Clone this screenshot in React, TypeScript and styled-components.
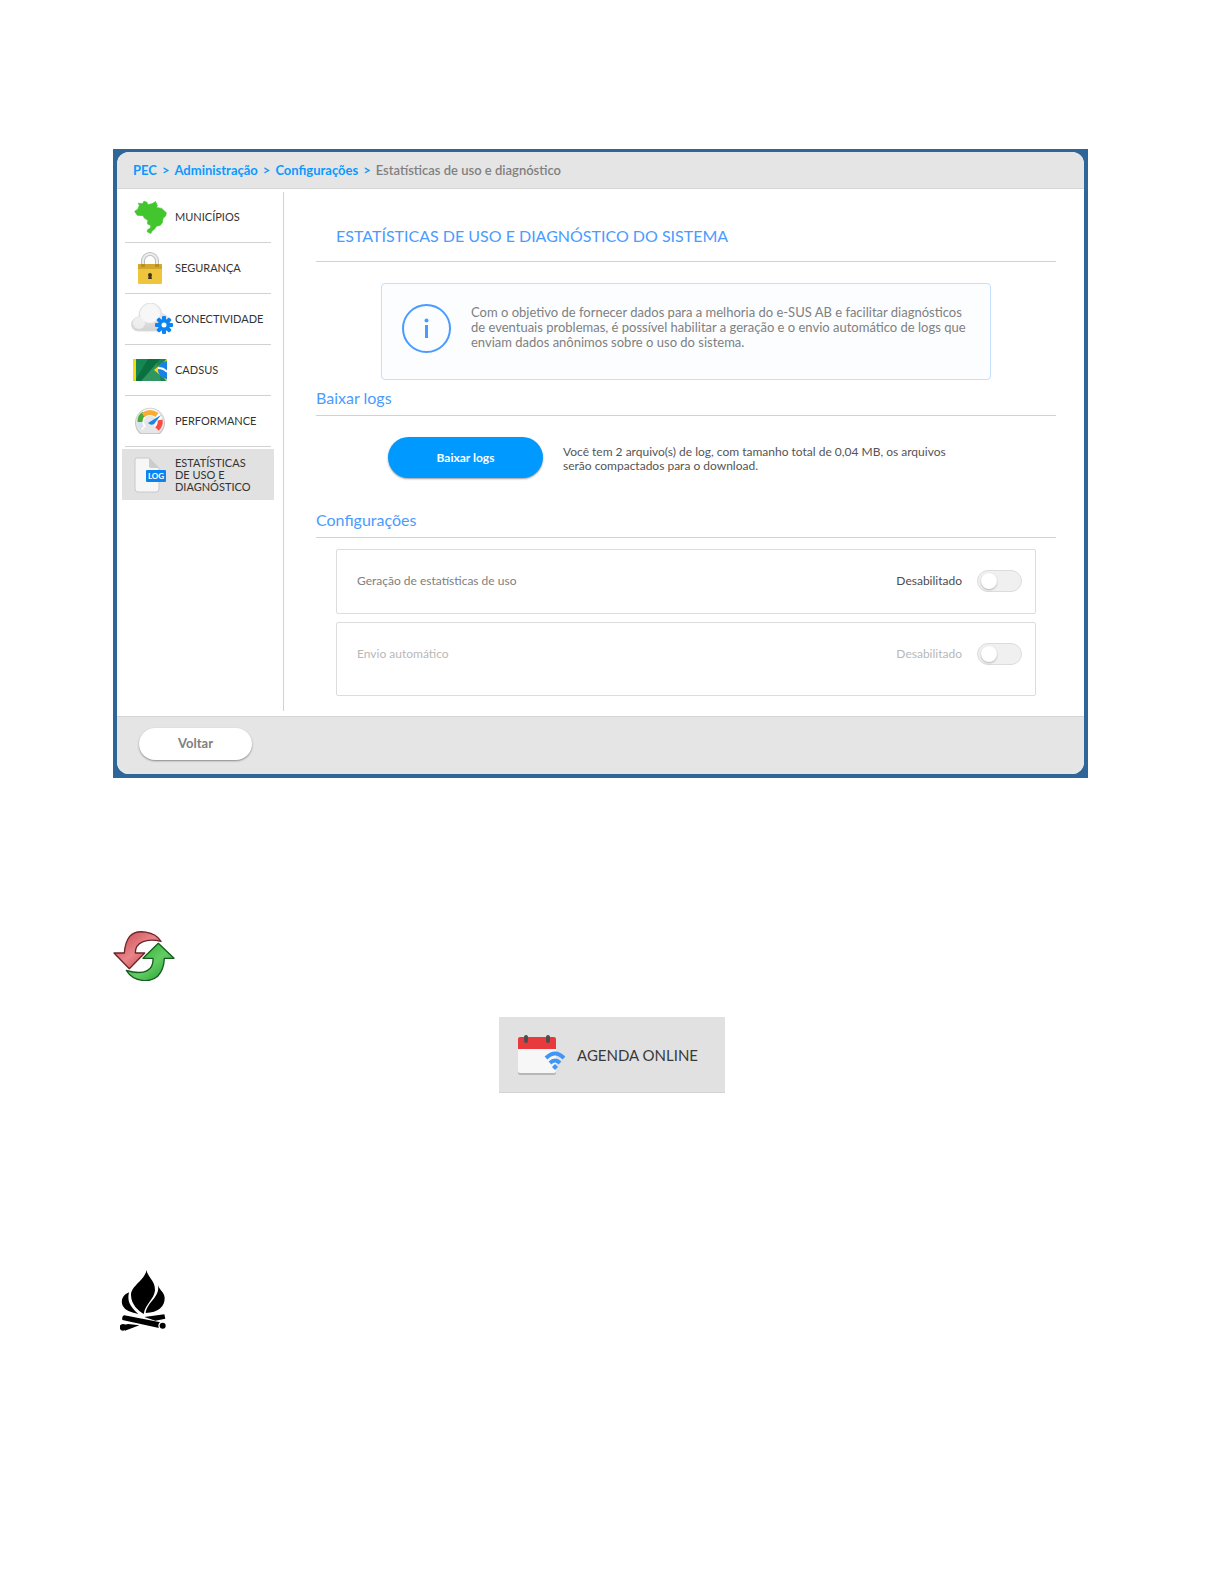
import React from "react";
import styled, { createGlobalStyle } from "styled-components";

const GlobalStyle = createGlobalStyle`
  * { box-sizing: border-box; }
  body {
    margin: 0;
    background: #ffffff;
    color: #444444;
    font-family: Lato, "Liberation Sans", sans-serif;
  }
`;

const Page = styled.main`
  display: flex;
  flex-direction: column;
  padding: 149px 113px 250px;
`;

const Frame = styled.section`
  width: 100%;
  max-width: 975px;
  padding: 3px 4px 4px;
  background: #2f6699;
`;

const Shell = styled.div`
  overflow: hidden;
  border-radius: 12px;
  background: #ffffff;
`;

const Breadcrumb = styled.nav`
  display: flex;
  align-items: center;
  gap: 5px;
  height: 37px;
  padding: 0 16px;
  border-bottom: 1px solid #d6d6d6;
  background: #e5e5e5;
  color: #0d99ff;
  font-size: 13px;
  font-weight: 700;
`;

const Crumb = styled.a`
  color: #0d99ff;
  text-decoration: none;
`;

const CurrentCrumb = styled.span`
  color: #808080;
  font-weight: 600;
`;

const Body = styled.div`
  display: flex;
  padding: 3px 28px 5px 0;
`;

const Sidebar = styled.nav`
  flex: none;
  width: 167px;
  padding: 0 12px 0 8px;
  border-right: 1px solid #d2d2d2;
`;

const SideLink = styled.a<{ $active?: boolean }>`
  display: flex;
  align-items: center;
  height: 51px;
  margin: ${(p) => (p.$active ? "2px -3px 0" : "0")};
  padding: ${(p) => (p.$active ? "0 3px" : "0")};
  border-bottom: ${(p) => (p.$active ? "0" : "1px solid #d2d2d2")};
  background: ${(p) => (p.$active ? "#e1e1e1" : "transparent")};
  color: #333333;
  font-size: 11px;
  line-height: 12px;
  text-decoration: none;
`;

const IconSlot = styled.span`
  display: flex;
  flex: none;
  justify-content: center;
  width: 50px;
`;

const Content = styled.div`
  flex: 1;
  min-width: 0;
  padding: 0 0 15px 32px;
`;

const PageTitle = styled.h1`
  margin: 0;
  padding: 34px 20px 15px;
  border-bottom: 1px solid #d2d2d2;
  color: #4a9bff;
  font-size: 16px;
  font-weight: 400;
  line-height: 20px;
`;

const SectionTitle = styled.h2<{ $gap: number }>`
  margin: ${(p) => p.$gap}px 0 0;
  padding-bottom: 7px;
  border-bottom: 1px solid #d2d2d2;
  color: #4a9bff;
  font-size: 16px;
  font-weight: 400;
  line-height: 20px;
`;

const Notice = styled.div`
  display: flex;
  gap: 20px;
  margin: 21px 65px 0;
  padding: 20px 20px 26px;
  border: 1px solid #c5e0fb;
  border-radius: 4px;
  background: #fbfdff;
`;

const NoticeText = styled.p`
  margin: 1px 0 0;
  color: #808080;
  font-size: 13px;
  line-height: 15px;
`;

const DownloadRow = styled.div`
  display: flex;
  align-items: center;
  gap: 20px;
  margin-top: 21px;
  padding: 0 72px;
`;

const PrimaryButton = styled.button`
  flex: none;
  width: 155px;
  height: 41px;
  border: 0;
  border-radius: 21px;
  background: #0099ff;
  box-shadow: 0 1px 2px rgba(0, 0, 0, 0.4);
  color: #ffffff;
  font: 700 12px Lato, sans-serif;
`;

const DownloadText = styled.p`
  max-width: 400px;
  margin: 3px 0 0;
  color: #555555;
  font-size: 12px;
  line-height: 14px;
`;

const Settings = styled.div`
  display: flex;
  flex-direction: column;
  gap: 8px;
  margin: 11px 20px 0;
`;

const Setting = styled.div<{ $muted?: boolean }>`
  display: flex;
  align-items: center;
  gap: 15px;
  padding: 20px 13px ${(p) => (p.$muted ? 30 : 21)}px 20px;
  border: 1px solid #dcdcdc;
  border-radius: 2px;
  color: ${(p) => (p.$muted ? "#b8b8b8" : "#808080")};
  font-size: 12px;
  line-height: 14px;
`;

const SettingLabel = styled.label`
  flex: 1;
`;

const State = styled.span<{ $muted?: boolean }>`
  color: ${(p) => (p.$muted ? "#b8b8b8" : "#4d4d4d")};
`;

const Switch = styled.input`
  display: flex;
  align-items: center;
  appearance: none;
  width: 45px;
  height: 22px;
  margin: 0;
  padding: 0 3px;
  border: 1px solid #dcdcdc;
  border-radius: 11px;
  background: #f0f0f0;

  &::before {
    content: "";
    width: 16px;
    height: 16px;
    border-radius: 50%;
    background: #ffffff;
    box-shadow: 0 1px 2px rgba(0, 0, 0, 0.25);
  }

  &:checked {
    justify-content: flex-end;
    background: #0099ff;
  }
`;

const Footer = styled.footer`
  display: flex;
  padding: 11px 22px 14px;
  border-top: 1px solid #d6d6d6;
  background: #e5e5e5;
`;

const BackButton = styled.button`
  width: 113px;
  height: 32px;
  padding: 0 0 2px;
  border: 0;
  border-radius: 16px;
  background: #ffffff;
  box-shadow: 0 1px 2px rgba(0, 0, 0, 0.4);
  color: #808080;
  font: 700 13px Lato, sans-serif;
`;

const Figure = styled.div<{ $top: number; $indent?: number }>`
  display: flex;
  margin-top: ${(p) => p.$top}px;
  padding-left: ${(p) => p.$indent ?? 0}px;
`;

const AgendaButton = styled.button`
  display: flex;
  align-items: center;
  align-self: center;
  gap: 12px;
  width: 226px;
  height: 76px;
  margin-top: 36px;
  padding: 0 19px;
  border: 0;
  border-bottom: 1px solid #d4d4d4;
  background: #e1e1e1;
  color: #3a3a3a;
  font: 400 15px Lato, sans-serif;
`;

const BrazilIcon = () => (
  <svg width="33" height="34" viewBox="76 168 100 102" aria-hidden="true">
    <path
      fill="#42c52d"
      stroke="#42c52d"
      strokeWidth="2"
      strokeLinejoin="round"
      d="M78 202L88 195L92 184L89 177L102 179L106 171L115 174L118 182L132 178L141 172L147 184L144 190L160 193L174 206L172 216L164 223L162 236L156 244L144 247L138 256L130 262L127 269L116 264L117 258L126 252L127 245L117 240L118 229L107 222L104 215L86 214Z"
    />
  </svg>
);

const LockIcon = () => (
  <svg width="24" height="33" viewBox="0 0 24 33" aria-hidden="true">
    <path d="M5 15V9a7 7 0 0 1 14 0v6" fill="none" stroke="#bdbdbd" strokeWidth="4" />
    <path d="M5 15V9a7 7 0 0 1 14 0v6" fill="none" stroke="#ececec" strokeWidth="2" />
    <path d="M0 13q0-1 1-1h22q1 0 1 1v18q0 1-1 1H1q-1 0-1-1z" fill="#efc53c" />
    <path d="M0 13q0-1 1-1h22q1 0 1 1v4H0z" fill="#d3a72c" />
    <path d="M3 12h4v3H3zM17 12h4v3h-4z" fill="#b78f22" />
    <circle cx="12" cy="23" r="2" fill="#3c3527" />
    <path d="M11 23h2l1 4h-4z" fill="#3c3527" />
  </svg>
);

const CloudIcon = () => (
  <svg width="46" height="32" viewBox="-4 0 46 32" aria-hidden="true">
    <defs>
      <linearGradient id="cloud" x1="0" y1="0" x2="0" y2="1">
        <stop offset="0" stopColor="#f7f7f7" />
        <stop offset="1" stopColor="#d2d2d2" />
      </linearGradient>
    </defs>
    <path
      d="M8 28C-2 28-2 15 8 14C8-4 29-4 31 11C41 12 41 28 32 28z"
      fill="url(#cloud)"
      stroke="#dddddd"
    />
    <ellipse cx="19" cy="11" rx="10" ry="9" fill="#f7f7f7" />
    <circle cx="8" cy="20" r="6" fill="#f5f5f5" opacity=".7" />
    <g fill="#0b84f3" transform="translate(33 22)">
      <circle r="6" />
      {[0, 45, 90, 135, 180, 225, 270, 315].map((a) => (
        <rect key={a} x="-2" y="-9" width="4" height="5" rx="1" transform={`rotate(${a})`} />
      ))}
      <circle r="2.5" fill="#ffffff" />
    </g>
  </svg>
);

const CardIcon = () => (
  <svg width="34" height="22" viewBox="0 0 34 22" aria-hidden="true">
    <clipPath id="card"><rect width="34" height="22" rx="2" /></clipPath>
    <g clipPath="url(#card)">
      <rect width="34" height="22" fill="#168653" />
      <path d="M3 20L15 0h12L9 22H3z" fill="#0b703f" />
      <path d="M8 22L24 4l4 18z" fill="#3c9d67" opacity=".7" />
      <path d="M0 0h3v22H0zM34 0L21 11L34 22z" fill="#f6d912" />
      <circle cx="34" cy="11" r="9" fill="#1781e5" />
      <path d="M25 9q6 0 9 4" fill="none" stroke="#ffffff" strokeWidth="2" />
    </g>
  </svg>
);

const GaugeIcon = () => (
  <svg width="30" height="28" viewBox="0 0 30 28" aria-hidden="true">
    <path d="M5 27a15 15 0 1 1 20 0z" fill="#c8c8c8" />
    <path d="M6 26a14 14 0 1 1 18 0z" fill="#e6e6e6" />
    <path d="M7 23a12 12 0 1 1 16 0l-4-4a6 6 0 1 0-8 0z" fill="#ffffff" />
    <g fill="none" strokeWidth="5">
      <path d="M7 21Q5 19 5 15" stroke="#d8e2ec" />
      <path d="M5 15Q5 9 9 7" stroke="#47ac39" />
      <path d="M8 8Q15 3 22 8" stroke="#f6ac37" />
      <path d="M25 13Q26 18 22 22" stroke="#fa4b3e" />
    </g>
    <path d="M13 16L26 8l-7 9q-3 2-6-1z" fill="#1985e9" />
  </svg>
);

const LogIcon = () => (
  <svg width="32" height="36" viewBox="1 0 32 36" aria-hidden="true">
    <path d="M4 1h12l10 10v21q0 3-3 3H5q-3 0-3-3V3q0-2 2-2z" fill="#f7f7f7" stroke="#c9c9c9" />
    <path d="M16 1v8q0 2 2 2h8z" fill="#cccccc" />
    <rect x="13" y="13" width="20" height="12" rx="1" fill="#0b84f3" />
    <text x="23" y="22" fill="#ffffff" fontFamily="Lato" fontSize="8" fontWeight="700" textAnchor="middle">
      LOG
    </text>
  </svg>
);

const InfoIcon = () => (
  <svg width="49" height="49" viewBox="0 0 49 49" aria-hidden="true">
    <circle cx="24.5" cy="24.5" r="23.5" fill="none" stroke="#4a9bff" strokeWidth="2" />
    <circle cx="24.5" cy="16.5" r="2" fill="#4a9bff" />
    <path d="M23 21h3v13h-3z" fill="#4a9bff" />
  </svg>
);

const RefreshIcon = () => (
  <svg width="62" height="50" viewBox="26 46 186 150" aria-label="Atualizar" role="img">
    <defs>
      <linearGradient id="red" x1="0" y1="0" x2="1" y2="1">
        <stop offset="0" stopColor="#c83f45" />
        <stop offset=".5" stopColor="#e8868a" />
        <stop offset="1" stopColor="#c9252c" />
      </linearGradient>
      <linearGradient id="green" x1="0" y1="0" x2="1" y2="1">
        <stop offset="0" stopColor="#1fa52a" />
        <stop offset=".55" stopColor="#63cc63" />
        <stop offset="1" stopColor="#159b23" />
      </linearGradient>
    </defs>
    <path
      d="M170 77C152 48 98 38 76 62Q62 80 60 112H29l46 47 46-47H93C92 80 126 66 170 77z"
      fill="url(#red)" stroke="#6b2528" strokeWidth="4" strokeLinejoin="round"
    />
    <path
      d="M66 164C88 200 138 202 160 182Q179 162 180 128h29L162 83l-46 45h30C148 160 124 182 66 164z"
      fill="url(#green)" stroke="#175c20" strokeWidth="4" strokeLinejoin="round"
    />
  </svg>
);

const CalendarIcon = () => (
  <svg width="47" height="42" viewBox="0 0 47 42" aria-hidden="true">
    <rect x="0" y="8" width="38" height="33" rx="2" fill="#b7b7b7" />
    <rect x="0" y="4" width="38" height="35" rx="2" fill="#f7f7f7" />
    <path d="M0 15V5q0-2 2-2h34q2 0 2 2v10z" fill="#e8393d" />
    <path d="M8 3v4M30 3v4" stroke="#4d4d4d" strokeWidth="4" strokeLinecap="round" />
    <g fill="none" stroke="#3e96f7" strokeWidth="4">
      <path d="M28 24q9-9 18 0" />
      <path d="M32 29q5-5 10 0" />
    </g>
    <path d="M37 30l3 3-3 3-3-3z" fill="#3e96f7" />
  </svg>
);

const BonfireIcon = () => (
  <svg width="46" height="61" viewBox="49 45 138 183" aria-label="Fogueira" role="img">
    <path d="M129 45C130 65 155 76 154 106C152 132 126 146 120 177C106 168 82 150 82 120C82 92 122 78 129 45z" />
    <path d="M76 112C56 120 50 138 58 154Q66 170 104 177C78 154 70 138 76 112z" />
    <path d="M163 91C170 126 130 142 126 174C164 172 184 154 183 128C182 112 169 108 163 91z" />
    <path d="M122 186l60-8 3 13-30 6zM73 207l34 4-43 16-6-16z" />
    <path d="M62 181l108 21-4 17-110-24q-2-12 6-14z" />
    <circle cx="58" cy="217" r="10" />
    <circle cx="176" cy="212" r="12" fill="#ffffff" />
    <circle cx="177" cy="212" r="9" />
  </svg>
);

const menu = [
  { label: "MUNICÍPIOS", Icon: BrazilIcon },
  { label: "SEGURANÇA", Icon: LockIcon },
  { label: "CONECTIVIDADE", Icon: CloudIcon },
  { label: "CADSUS", Icon: CardIcon },
  { label: "PERFORMANCE", Icon: GaugeIcon },
  { label: "ESTATÍSTICAS DE USO E DIAGNÓSTICO", Icon: LogIcon, active: true },
];

const SideLabel = styled.span`
  max-width: 86px;
`;

export default function App() {
  return (
    <Page>
      <GlobalStyle />
      <Frame>
        <Shell>
          <Breadcrumb aria-label="Navegação estrutural">
            {["PEC", "Administração", "Configurações"].map((name) => (
              <React.Fragment key={name}>
                <Crumb href="#">{name}</Crumb>
                <span>&gt;</span>
              </React.Fragment>
            ))}
            <CurrentCrumb>Estatísticas de uso e diagnóstico</CurrentCrumb>
          </Breadcrumb>
          <Body>
            <Sidebar aria-label="Configurações">
              {menu.map(({ label, Icon, active }) => (
                <SideLink key={label} href="#" $active={active}>
                  <IconSlot><Icon /></IconSlot>
                  <SideLabel>{label}</SideLabel>
                </SideLink>
              ))}
            </Sidebar>
            <Content>
              <PageTitle>ESTATÍSTICAS DE USO E DIAGNÓSTICO DO SISTEMA</PageTitle>
              <Notice>
                <InfoIcon />
                <NoticeText>
                  Com o objetivo de fornecer dados para a melhoria do e-SUS AB e facilitar diagnósticos
                  <br />
                  de eventuais problemas, é possível habilitar a geração e o envio automático de logs que
                  <br />
                  enviam dados anônimos sobre o uso do sistema.
                </NoticeText>
              </Notice>
              <SectionTitle $gap={8}>Baixar logs</SectionTitle>
              <DownloadRow>
                <PrimaryButton type="button">Baixar logs</PrimaryButton>
                <DownloadText>
                  Você tem 2 arquivo(s) de log, com tamanho total de 0,04 MB, os arquivos serão
                  compactados para o download.
                </DownloadText>
              </DownloadRow>
              <SectionTitle $gap={32}>Configurações</SectionTitle>
              <Settings>
                <Setting>
                  <SettingLabel htmlFor="usage">Geração de estatísticas de uso</SettingLabel>
                  <State>Desabilitado</State>
                  <Switch id="usage" type="checkbox" role="switch" />
                </Setting>
                <Setting $muted>
                  <SettingLabel htmlFor="auto">Envio automático</SettingLabel>
                  <State $muted>Desabilitado</State>
                  <Switch id="auto" type="checkbox" role="switch" disabled />
                </Setting>
              </Settings>
            </Content>
          </Body>
          <Footer>
            <BackButton type="button">Voltar</BackButton>
          </Footer>
        </Shell>
      </Frame>
      <Figure $top={153}><RefreshIcon /></Figure>
      <AgendaButton type="button">
        <CalendarIcon />
        AGENDA ONLINE
      </AgendaButton>
      <Figure $top={177} $indent={7}><BonfireIcon /></Figure>
    </Page>
  );
}
